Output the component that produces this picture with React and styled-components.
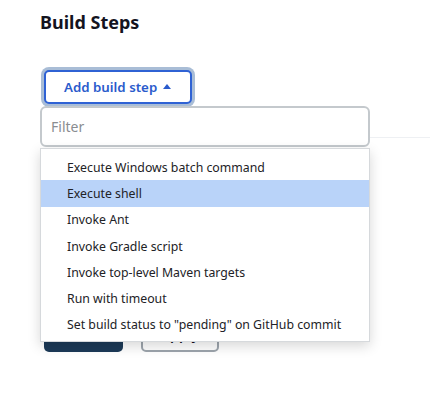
import React from 'react';
import styled, { createGlobalStyle } from 'styled-components';

const GlobalStyle = createGlobalStyle`
  html, body {
    margin: 0;
    padding: 0;
    background: #ffffff;
  }

  body {
    font-family: 'Noto Sans', 'Open Sans', sans-serif;
    color: #14141f;
  }
`;

const StyledPage = styled.div`
  position: relative;
  padding: 8px 0 0 40px;
  height: 402px;
  box-sizing: border-box;
  overflow: hidden;
`;

const Title = styled.h2`
  margin: 0;
  font-size: 18px;
  line-height: 28px;
  font-weight: 700;
  color: #14141f;
`;

const StepArea = styled.div`
  position: relative;
  margin-top: 34px;
  width: 330px;
`;

const AddButton = styled.button`
  display: inline-flex;
  align-items: center;
  gap: 6px;
  box-sizing: border-box;
  margin-left: 4px;
  height: 34px;
  width: 148px;
  padding: 0 0 0 18px;
  border: 2px solid #2f62d4;
  border-radius: 5px;
  background: #ffffff;
  box-shadow: 0 0 0 3px #a9bdd6;
  color: #2a5bcc;
  font-family: 'Noto Sans', 'Open Sans', sans-serif;
  font-size: 13.3px;
  font-weight: 600;
  cursor: pointer;
`;

const Caret = styled.span`
  width: 0;
  height: 0;
  border-left: 4.5px solid transparent;
  border-right: 4.5px solid transparent;
  border-bottom: 5px solid #2a5bcc;
  margin-top: -1px;
`;

const Popover = styled.div`
  position: absolute;
  top: 36px;
  left: 0;
  width: 330px;
  z-index: 2;
`;

const FilterInput = styled.input`
  display: block;
  box-sizing: border-box;
  width: 100%;
  height: 41px;
  padding: 0 9px;
  border: 2px solid #c4c9cd;
  border-radius: 6px;
  background: #ffffff;
  font-family: 'Noto Sans', 'Open Sans', sans-serif;
  font-size: 14px;
  color: #14141f;
  outline: none;

  &::placeholder {
    color: #8a8d91;
  }
`;

const Menu = styled.ul`
  list-style: none;
  box-sizing: border-box;
  margin: 1px 0 0;
  padding: 5px 0 3px;
  border: 1px solid #d6d9dc;
  background: #ffffff;
  box-shadow: 0 4px 12px rgba(0, 0, 0, 0.16);
`;

const MenuItem = styled.li`
  height: 26.3px;
  display: flex;
  align-items: center;
  padding-left: 26px;
  font-size: 12.3px;
  color: #222226;
  background: ${({ active }) => (active ? '#b9d3f9' : 'transparent')};
`;

const Divider = styled.div`
  height: 1px;
  margin-top: 33px;
  background: #eef0f3;
`;

const Actions = styled.div`
  display: flex;
  gap: 18px;
  margin: 178px 0 0 4px;
`;

const SaveButton = styled.button`
  width: 79px;
  height: 36px;
  border: none;
  border-radius: 5px;
  background: #1c3a58;
  color: #ffffff;
  font-family: 'Noto Sans', 'Open Sans', sans-serif;
  font-size: 14px;
  font-weight: 600;
`;

const ApplyButton = styled.button`
  width: 78px;
  height: 36px;
  box-sizing: border-box;
  border: 2px solid #9da5ad;
  border-radius: 5px;
  background: #ffffff;
  color: #14141f;
  font-family: 'Noto Sans', 'Open Sans', sans-serif;
  font-size: 14px;
  font-weight: 600;
`;

const steps = [
  'Execute Windows batch command',
  'Execute shell',
  'Invoke Ant',
  'Invoke Gradle script',
  'Invoke top-level Maven targets',
  'Run with timeout',
  'Set build status to "pending" on GitHub commit',
];

const App = () => (
  <>
    <GlobalStyle />
    <StyledPage>
      <Title>Build Steps</Title>

      <StepArea>
        <AddButton type="button">
          Add build step
          <Caret />
        </AddButton>

        <Popover>
          <FilterInput placeholder="Filter" />
          <Menu>
            {steps.map((step, i) => (
              <MenuItem key={i} active={i === 1}>
                {step}
              </MenuItem>
            ))}
          </Menu>
        </Popover>
      </StepArea>

      <Divider />

      <Actions>
        <SaveButton type="button">Save</SaveButton>
        <ApplyButton type="button">Apply</ApplyButton>
      </Actions>
    </StyledPage>
  </>
);

export default App;
